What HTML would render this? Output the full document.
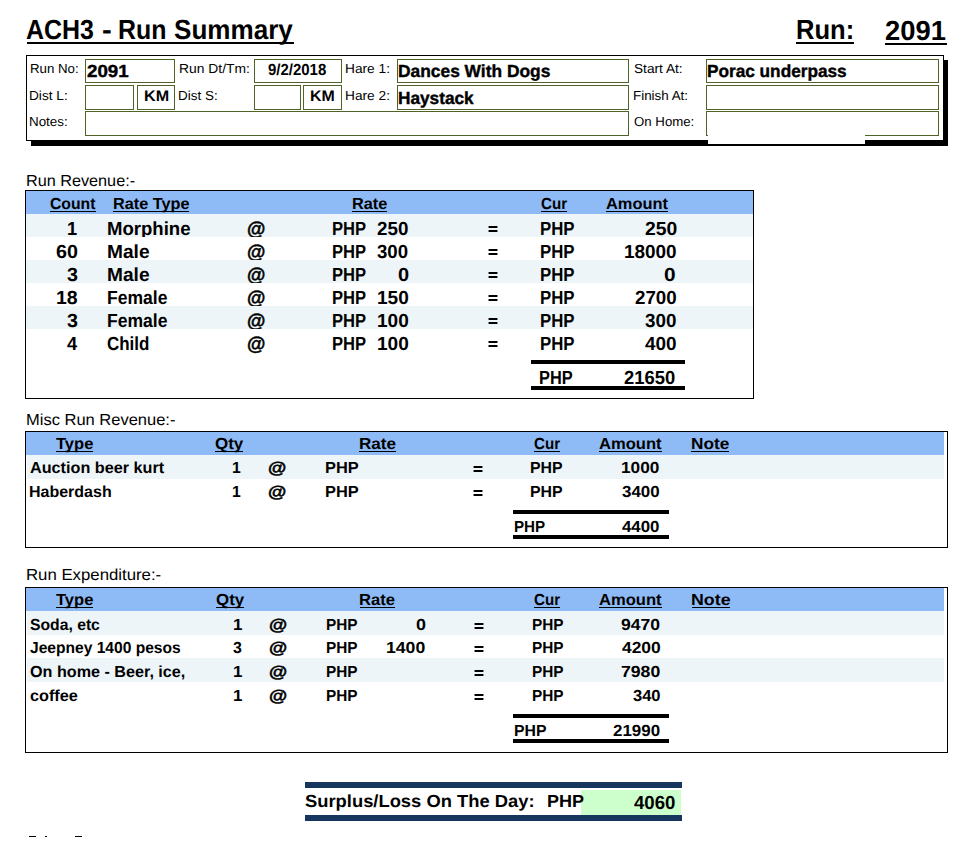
<!DOCTYPE html>
<html><head><meta charset="utf-8"><title>ACH3 - Run Summary</title><style>
html,body{margin:0;padding:0;background:#fff}
body{position:relative;width:977px;height:845px;overflow:hidden;font-family:"Liberation Sans",sans-serif;text-rendering:geometricPrecision;color:#000}
.r{position:absolute}
.t{position:absolute;white-space:pre;line-height:1;transform-origin:0 0}
</style></head><body>
<div class="t" style="left:26.38px;top:16.00px;font-size:27.64px;transform:scaleX(0.9038);font-weight:bold">ACH3</div>
<div class="t" style="left:101.53px;top:16.00px;font-size:27.64px;transform:scaleX(1.0604);font-weight:bold">-</div>
<div class="t" style="left:117.92px;top:16.00px;font-size:27.64px;transform:scaleX(0.9011);font-weight:bold">Run</div>
<div class="t" style="left:173.82px;top:16.00px;font-size:27.64px;transform:scaleX(0.9433);font-weight:bold">Summary</div>
<div class="r" style="left:27px;top:42px;width:267px;height:2px;background:#000"></div>
<div class="t" style="left:796.07px;top:16.00px;font-size:27.64px;transform:scaleX(0.9249);font-weight:bold">Run:</div>
<div class="r" style="left:796px;top:42px;width:58px;height:2px;background:#000"></div>
<div class="t" style="left:884.94px;top:17.00px;font-size:27.64px;transform:scaleX(0.9906);font-weight:bold">2091</div>
<div class="r" style="left:885px;top:43px;width:62px;height:2px;background:#000"></div>
<div class="r" style="left:31px;top:60px;width:917px;height:86px;background:#000"></div>
<div class="r" style="left:26px;top:55px;width:918px;height:86px;background:#fff"></div>
<div class="r" style="left:26px;top:55px;width:918px;height:1px;background:#000"></div>
<div class="r" style="left:26px;top:140px;width:918px;height:1px;background:#000"></div>
<div class="r" style="left:26px;top:55px;width:1px;height:86px;background:#000"></div>
<div class="r" style="left:943px;top:55px;width:1px;height:86px;background:#000"></div>
<div class="r" style="left:85px;top:59px;width:90px;height:1px;background:#4F6228"></div>
<div class="r" style="left:85px;top:82px;width:90px;height:1px;background:#4F6228"></div>
<div class="r" style="left:85px;top:59px;width:1px;height:24px;background:#4F6228"></div>
<div class="r" style="left:174px;top:59px;width:1px;height:24px;background:#4F6228"></div>
<div class="r" style="left:254px;top:59px;width:88px;height:1px;background:#4F6228"></div>
<div class="r" style="left:254px;top:82px;width:88px;height:1px;background:#4F6228"></div>
<div class="r" style="left:254px;top:59px;width:1px;height:24px;background:#4F6228"></div>
<div class="r" style="left:341px;top:59px;width:1px;height:24px;background:#4F6228"></div>
<div class="r" style="left:397px;top:59px;width:232px;height:1px;background:#4F6228"></div>
<div class="r" style="left:397px;top:82px;width:232px;height:1px;background:#4F6228"></div>
<div class="r" style="left:397px;top:59px;width:1px;height:24px;background:#4F6228"></div>
<div class="r" style="left:628px;top:59px;width:1px;height:24px;background:#4F6228"></div>
<div class="r" style="left:706px;top:59px;width:233px;height:1px;background:#4F6228"></div>
<div class="r" style="left:706px;top:82px;width:233px;height:1px;background:#4F6228"></div>
<div class="r" style="left:706px;top:59px;width:1px;height:24px;background:#4F6228"></div>
<div class="r" style="left:938px;top:59px;width:1px;height:24px;background:#4F6228"></div>
<div class="r" style="left:85px;top:85px;width:49px;height:1px;background:#4F6228"></div>
<div class="r" style="left:85px;top:109px;width:49px;height:1px;background:#4F6228"></div>
<div class="r" style="left:85px;top:85px;width:1px;height:25px;background:#4F6228"></div>
<div class="r" style="left:133px;top:85px;width:1px;height:25px;background:#4F6228"></div>
<div class="r" style="left:137px;top:85px;width:38px;height:1px;background:#4F6228"></div>
<div class="r" style="left:137px;top:109px;width:38px;height:1px;background:#4F6228"></div>
<div class="r" style="left:137px;top:85px;width:1px;height:25px;background:#4F6228"></div>
<div class="r" style="left:174px;top:85px;width:1px;height:25px;background:#4F6228"></div>
<div class="r" style="left:254px;top:85px;width:47px;height:1px;background:#4F6228"></div>
<div class="r" style="left:254px;top:109px;width:47px;height:1px;background:#4F6228"></div>
<div class="r" style="left:254px;top:85px;width:1px;height:25px;background:#4F6228"></div>
<div class="r" style="left:300px;top:85px;width:1px;height:25px;background:#4F6228"></div>
<div class="r" style="left:303px;top:85px;width:39px;height:1px;background:#4F6228"></div>
<div class="r" style="left:303px;top:109px;width:39px;height:1px;background:#4F6228"></div>
<div class="r" style="left:303px;top:85px;width:1px;height:25px;background:#4F6228"></div>
<div class="r" style="left:341px;top:85px;width:1px;height:25px;background:#4F6228"></div>
<div class="r" style="left:397px;top:85px;width:232px;height:1px;background:#4F6228"></div>
<div class="r" style="left:397px;top:109px;width:232px;height:1px;background:#4F6228"></div>
<div class="r" style="left:397px;top:85px;width:1px;height:25px;background:#4F6228"></div>
<div class="r" style="left:628px;top:85px;width:1px;height:25px;background:#4F6228"></div>
<div class="r" style="left:706px;top:85px;width:233px;height:1px;background:#4F6228"></div>
<div class="r" style="left:706px;top:109px;width:233px;height:1px;background:#4F6228"></div>
<div class="r" style="left:706px;top:85px;width:1px;height:25px;background:#4F6228"></div>
<div class="r" style="left:938px;top:85px;width:1px;height:25px;background:#4F6228"></div>
<div class="r" style="left:85px;top:111px;width:544px;height:1px;background:#4F6228"></div>
<div class="r" style="left:85px;top:135px;width:544px;height:1px;background:#4F6228"></div>
<div class="r" style="left:85px;top:111px;width:1px;height:25px;background:#4F6228"></div>
<div class="r" style="left:628px;top:111px;width:1px;height:25px;background:#4F6228"></div>
<div class="r" style="left:706px;top:111px;width:233px;height:1px;background:#4F6228"></div>
<div class="r" style="left:706px;top:135px;width:233px;height:1px;background:#4F6228"></div>
<div class="r" style="left:706px;top:111px;width:1px;height:25px;background:#4F6228"></div>
<div class="r" style="left:938px;top:111px;width:1px;height:25px;background:#4F6228"></div>
<div class="r" style="left:708px;top:135px;width:157px;height:9px;background:#fff"></div>
<div class="t" style="left:29.50px;top:62.00px;font-size:13.09px;transform:scaleX(1.0141)">Run No:</div>
<div class="t" style="left:29.47px;top:89.00px;font-size:13.09px;transform:scaleX(1.0453)">Dist L:</div>
<div class="t" style="left:29.49px;top:115.00px;font-size:13.09px;transform:scaleX(1.0232)">Notes:</div>
<div class="t" style="left:179.46px;top:62.00px;font-size:13.09px;transform:scaleX(1.0598)">Run Dt/Tm:</div>
<div class="t" style="left:177.59px;top:89.00px;font-size:13.09px;transform:scaleX(1.0286)">Dist S:</div>
<div class="t" style="left:345.37px;top:62.00px;font-size:13.09px;transform:scaleX(1.0480)">Hare 1:</div>
<div class="t" style="left:345.37px;top:89.00px;font-size:13.09px;transform:scaleX(1.0480)">Hare 2:</div>
<div class="t" style="left:633.88px;top:62.00px;font-size:13.09px;transform:scaleX(1.0442)">Start At:</div>
<div class="t" style="left:633.40px;top:89.00px;font-size:13.09px;transform:scaleX(1.0230)">Finish At:</div>
<div class="t" style="left:633.87px;top:115.00px;font-size:13.09px;transform:scaleX(1.0116)">On Home:</div>
<div class="t" style="left:86.54px;top:63.00px;font-size:17.45px;transform:scaleX(1.0756);font-weight:bold;-webkit-text-stroke:0.4px #000">2091</div>
<div class="t" style="left:398.03px;top:63.00px;font-size:17.45px;transform:scaleX(0.9960);font-weight:bold;-webkit-text-stroke:0.4px #000">Dances With Dogs</div>
<div class="t" style="left:398.04px;top:89.50px;font-size:17.45px;transform:scaleX(0.9882);font-weight:bold;-webkit-text-stroke:0.4px #000">Haystack</div>
<div class="t" style="left:706.74px;top:63.00px;font-size:17.45px;transform:scaleX(0.9869);font-weight:bold;-webkit-text-stroke:0.4px #000">Porac underpass</div>
<div class="t" style="left:267.88px;top:63.00px;font-size:16.00px;transform:scaleX(0.9357);font-weight:bold">9/2/2018</div>
<div class="t" style="left:143.51px;top:89.00px;font-size:15.27px;transform:scaleX(1.0559);font-weight:bold">KM</div>
<div class="t" style="left:309.63px;top:89.00px;font-size:15.27px;transform:scaleX(1.0421);font-weight:bold">KM</div>
<div class="t" style="left:25.66px;top:174.00px;font-size:16.00px;transform:scaleX(1.0133)">Run Revenue:-</div>
<div class="r" style="left:25px;top:190px;width:729px;height:209px;background:#fff"></div>
<div class="r" style="left:25px;top:190px;width:729px;height:1px;background:#000"></div>
<div class="r" style="left:25px;top:398px;width:729px;height:1px;background:#000"></div>
<div class="r" style="left:25px;top:190px;width:1px;height:209px;background:#000"></div>
<div class="r" style="left:753px;top:190px;width:1px;height:209px;background:#000"></div>
<div class="r" style="left:26px;top:191px;width:727px;height:23px;background:#8EBAF5"></div>
<div class="t" style="left:49.87px;top:197.00px;font-size:16.00px;transform:scaleX(0.9832);font-weight:bold">Count</div>
<div class="r" style="left:50px;top:211px;width:46px;height:1px;background:#000"></div>
<div class="t" style="left:112.50px;top:197.00px;font-size:16.00px;transform:scaleX(1.0158);font-weight:bold">Rate Type</div>
<div class="r" style="left:113px;top:211px;width:76px;height:1px;background:#000"></div>
<div class="t" style="left:351.60px;top:197.00px;font-size:16.00px;transform:scaleX(1.0169);font-weight:bold">Rate</div>
<div class="r" style="left:352px;top:211px;width:35px;height:1px;background:#000"></div>
<div class="t" style="left:540.89px;top:197.00px;font-size:16.00px;transform:scaleX(0.9483);font-weight:bold">Cur</div>
<div class="r" style="left:541px;top:211px;width:26px;height:1px;background:#000"></div>
<div class="t" style="left:605.79px;top:197.00px;font-size:16.00px;transform:scaleX(1.0261);font-weight:bold">Amount</div>
<div class="r" style="left:606px;top:211px;width:62px;height:1px;background:#000"></div>
<div class="r" style="left:26px;top:214px;width:727px;height:23px;background:#EDF5F8"></div>
<div class="t" style="left:66.76px;top:221.00px;font-size:18.91px;transform:scaleX(0.9667);font-weight:bold">1</div>
<div class="t" style="left:106.55px;top:221.00px;font-size:18.91px;transform:scaleX(0.9813);font-weight:bold">Morphine</div>
<div class="t" style="left:246.92px;top:221.00px;font-size:18.91px;transform:scaleX(0.9962);font-weight:bold;-webkit-text-stroke:0.5px #000">@</div>
<div class="t" style="left:331.98px;top:221.00px;font-size:18.91px;transform:scaleX(0.8765);font-weight:bold">PHP</div>
<div class="t" style="left:376.84px;top:221.00px;font-size:18.91px;transform:scaleX(0.9929);font-weight:bold">250</div>
<div class="r" style="left:489px;top:226px;width:8px;height:2px;background:#000;box-shadow:-1px 0 0 #888,1px 0 0 #888"></div><div class="r" style="left:489px;top:230px;width:8px;height:2px;background:#000;box-shadow:-1px 0 0 #888,1px 0 0 #888"></div>
<div class="t" style="left:539.77px;top:221.00px;font-size:18.91px;transform:scaleX(0.8873);font-weight:bold">PHP</div>
<div class="t" style="left:644.82px;top:221.00px;font-size:18.91px;transform:scaleX(1.0228);font-weight:bold">250</div>
<div class="r" style="left:26px;top:237px;width:727px;height:23px;background:#fff"></div>
<div class="t" style="left:55.76px;top:244.00px;font-size:18.91px;transform:scaleX(1.0424);font-weight:bold">60</div>
<div class="t" style="left:106.51px;top:244.00px;font-size:18.91px;transform:scaleX(1.0116);font-weight:bold">Male</div>
<div class="t" style="left:246.92px;top:244.00px;font-size:18.91px;transform:scaleX(0.9962);font-weight:bold;-webkit-text-stroke:0.5px #000">@</div>
<div class="t" style="left:331.98px;top:244.00px;font-size:18.91px;transform:scaleX(0.8765);font-weight:bold">PHP</div>
<div class="t" style="left:377.08px;top:244.00px;font-size:18.91px;transform:scaleX(0.9852);font-weight:bold">300</div>
<div class="r" style="left:489px;top:249px;width:8px;height:2px;background:#000;box-shadow:-1px 0 0 #888,1px 0 0 #888"></div><div class="r" style="left:489px;top:253px;width:8px;height:2px;background:#000;box-shadow:-1px 0 0 #888,1px 0 0 #888"></div>
<div class="t" style="left:539.77px;top:244.00px;font-size:18.91px;transform:scaleX(0.8873);font-weight:bold">PHP</div>
<div class="t" style="left:624.42px;top:244.00px;font-size:18.91px;transform:scaleX(1.0014);font-weight:bold">18000</div>
<div class="r" style="left:26px;top:260px;width:727px;height:23px;background:#EDF5F8"></div>
<div class="t" style="left:66.56px;top:267.00px;font-size:18.91px;transform:scaleX(1.0417);font-weight:bold">3</div>
<div class="t" style="left:106.51px;top:267.00px;font-size:18.91px;transform:scaleX(1.0116);font-weight:bold">Male</div>
<div class="t" style="left:246.92px;top:267.00px;font-size:18.91px;transform:scaleX(0.9962);font-weight:bold;-webkit-text-stroke:0.5px #000">@</div>
<div class="t" style="left:331.98px;top:267.00px;font-size:18.91px;transform:scaleX(0.8765);font-weight:bold">PHP</div>
<div class="t" style="left:397.50px;top:267.00px;font-size:18.91px;transform:scaleX(1.0577);font-weight:bold">0</div>
<div class="r" style="left:489px;top:272px;width:8px;height:2px;background:#000;box-shadow:-1px 0 0 #888,1px 0 0 #888"></div><div class="r" style="left:489px;top:276px;width:8px;height:2px;background:#000;box-shadow:-1px 0 0 #888,1px 0 0 #888"></div>
<div class="t" style="left:539.77px;top:267.00px;font-size:18.91px;transform:scaleX(0.8873);font-weight:bold">PHP</div>
<div class="t" style="left:664.37px;top:267.00px;font-size:18.91px;transform:scaleX(1.1022);font-weight:bold">0</div>
<div class="r" style="left:26px;top:283px;width:727px;height:23px;background:#fff"></div>
<div class="t" style="left:55.68px;top:290.00px;font-size:18.91px;transform:scaleX(1.0318);font-weight:bold">18</div>
<div class="t" style="left:106.62px;top:290.00px;font-size:18.91px;transform:scaleX(0.9265);font-weight:bold">Female</div>
<div class="t" style="left:246.92px;top:290.00px;font-size:18.91px;transform:scaleX(0.9962);font-weight:bold;-webkit-text-stroke:0.5px #000">@</div>
<div class="t" style="left:331.98px;top:290.00px;font-size:18.91px;transform:scaleX(0.8765);font-weight:bold">PHP</div>
<div class="t" style="left:376.81px;top:290.00px;font-size:18.91px;transform:scaleX(1.0070);font-weight:bold">150</div>
<div class="r" style="left:489px;top:295px;width:8px;height:2px;background:#000;box-shadow:-1px 0 0 #888,1px 0 0 #888"></div><div class="r" style="left:489px;top:299px;width:8px;height:2px;background:#000;box-shadow:-1px 0 0 #888,1px 0 0 #888"></div>
<div class="t" style="left:539.77px;top:290.00px;font-size:18.91px;transform:scaleX(0.8873);font-weight:bold">PHP</div>
<div class="t" style="left:634.84px;top:290.00px;font-size:18.91px;transform:scaleX(0.9924);font-weight:bold">2700</div>
<div class="r" style="left:26px;top:306px;width:727px;height:23px;background:#EDF5F8"></div>
<div class="t" style="left:66.56px;top:313.00px;font-size:18.91px;transform:scaleX(1.0417);font-weight:bold">3</div>
<div class="t" style="left:106.62px;top:313.00px;font-size:18.91px;transform:scaleX(0.9265);font-weight:bold">Female</div>
<div class="t" style="left:246.92px;top:313.00px;font-size:18.91px;transform:scaleX(0.9962);font-weight:bold;-webkit-text-stroke:0.5px #000">@</div>
<div class="t" style="left:331.98px;top:313.00px;font-size:18.91px;transform:scaleX(0.8765);font-weight:bold">PHP</div>
<div class="t" style="left:376.81px;top:313.00px;font-size:18.91px;transform:scaleX(1.0070);font-weight:bold">100</div>
<div class="r" style="left:489px;top:318px;width:8px;height:2px;background:#000;box-shadow:-1px 0 0 #888,1px 0 0 #888"></div><div class="r" style="left:489px;top:322px;width:8px;height:2px;background:#000;box-shadow:-1px 0 0 #888,1px 0 0 #888"></div>
<div class="t" style="left:539.77px;top:313.00px;font-size:18.91px;transform:scaleX(0.8873);font-weight:bold">PHP</div>
<div class="t" style="left:645.18px;top:313.00px;font-size:18.91px;transform:scaleX(0.9951);font-weight:bold">300</div>
<div class="r" style="left:26px;top:329px;width:727px;height:23px;background:#fff"></div>
<div class="t" style="left:66.73px;top:336.00px;font-size:18.91px;transform:scaleX(0.9687);font-weight:bold">4</div>
<div class="t" style="left:107.12px;top:336.00px;font-size:18.91px;transform:scaleX(0.8974);font-weight:bold">Child</div>
<div class="t" style="left:246.92px;top:336.00px;font-size:18.91px;transform:scaleX(0.9962);font-weight:bold;-webkit-text-stroke:0.5px #000">@</div>
<div class="t" style="left:331.98px;top:336.00px;font-size:18.91px;transform:scaleX(0.8765);font-weight:bold">PHP</div>
<div class="t" style="left:376.81px;top:336.00px;font-size:18.91px;transform:scaleX(1.0070);font-weight:bold">100</div>
<div class="r" style="left:489px;top:341px;width:8px;height:2px;background:#000;box-shadow:-1px 0 0 #888,1px 0 0 #888"></div><div class="r" style="left:489px;top:345px;width:8px;height:2px;background:#000;box-shadow:-1px 0 0 #888,1px 0 0 #888"></div>
<div class="t" style="left:539.77px;top:336.00px;font-size:18.91px;transform:scaleX(0.8873);font-weight:bold">PHP</div>
<div class="t" style="left:645.02px;top:336.00px;font-size:18.91px;transform:scaleX(1.0003);font-weight:bold">400</div>
<div class="r" style="left:531px;top:360px;width:154px;height:4px;background:#000"></div>
<div class="r" style="left:531px;top:386px;width:154px;height:4px;background:#000"></div>
<div class="t" style="left:538.90px;top:370.00px;font-size:18.91px;transform:scaleX(0.8656);font-weight:bold">PHP</div>
<div class="t" style="left:623.96px;top:370.00px;font-size:18.91px;transform:scaleX(0.9736);font-weight:bold">21650</div>
<div class="t" style="left:25.64px;top:413.00px;font-size:16.00px;transform:scaleX(1.0306)">Misc Run Revenue:-</div>
<div class="r" style="left:25px;top:431px;width:923px;height:117px;background:#fff"></div>
<div class="r" style="left:25px;top:431px;width:923px;height:1px;background:#000"></div>
<div class="r" style="left:25px;top:547px;width:923px;height:1px;background:#000"></div>
<div class="r" style="left:25px;top:431px;width:1px;height:117px;background:#000"></div>
<div class="r" style="left:947px;top:431px;width:1px;height:117px;background:#000"></div>
<div class="r" style="left:26px;top:432px;width:918px;height:23px;background:#8EBAF5"></div>
<div class="t" style="left:55.83px;top:437.00px;font-size:16.00px;transform:scaleX(1.0327);font-weight:bold">Type</div>
<div class="r" style="left:56px;top:451px;width:37px;height:1px;background:#000"></div>
<div class="t" style="left:214.62px;top:437.00px;font-size:16.00px;transform:scaleX(1.0610);font-weight:bold">Qty</div>
<div class="r" style="left:215px;top:451px;width:28px;height:1px;background:#000"></div>
<div class="t" style="left:358.55px;top:437.00px;font-size:16.00px;transform:scaleX(1.0684);font-weight:bold">Rate</div>
<div class="r" style="left:359px;top:451px;width:37px;height:1px;background:#000"></div>
<div class="t" style="left:533.79px;top:437.00px;font-size:16.00px;transform:scaleX(0.9483);font-weight:bold">Cur</div>
<div class="r" style="left:534px;top:451px;width:26px;height:1px;background:#000"></div>
<div class="t" style="left:598.59px;top:437.00px;font-size:16.00px;transform:scaleX(1.0361);font-weight:bold">Amount</div>
<div class="r" style="left:599px;top:451px;width:63px;height:1px;background:#000"></div>
<div class="t" style="left:690.64px;top:437.00px;font-size:16.00px;transform:scaleX(1.0761);font-weight:bold">Note</div>
<div class="r" style="left:691px;top:451px;width:38px;height:1px;background:#000"></div>
<div class="r" style="left:27px;top:455px;width:917px;height:24px;background:#EDF5F8"></div>
<div class="t" style="left:29.99px;top:461.00px;font-size:16.00px;transform:scaleX(1.0130);font-weight:bold">Auction beer kurt</div>
<div class="t" style="left:232.02px;top:461.00px;font-size:16.00px;transform:scaleX(0.9812);font-weight:bold">1</div>
<div class="t" style="left:267.92px;top:461.00px;font-size:16.00px;transform:scaleX(1.1701);font-weight:bold;-webkit-text-stroke:0.5px #000">@</div>
<div class="t" style="left:324.90px;top:461.00px;font-size:16.00px;transform:scaleX(1.0230);font-weight:bold">PHP</div>
<div class="r" style="left:474px;top:466px;width:8px;height:2px;background:#000;box-shadow:-1px 0 0 #888,1px 0 0 #888"></div><div class="r" style="left:474px;top:470px;width:8px;height:2px;background:#000;box-shadow:-1px 0 0 #888,1px 0 0 #888"></div>
<div class="t" style="left:530.33px;top:461.00px;font-size:16.00px;transform:scaleX(0.9910);font-weight:bold">PHP</div>
<div class="t" style="left:621.42px;top:461.00px;font-size:16.00px;transform:scaleX(1.0761);font-weight:bold">1000</div>
<div class="t" style="left:29.32px;top:485.00px;font-size:16.00px;transform:scaleX(0.9995);font-weight:bold">Haberdash</div>
<div class="t" style="left:232.02px;top:485.00px;font-size:16.00px;transform:scaleX(0.9812);font-weight:bold">1</div>
<div class="t" style="left:267.92px;top:485.00px;font-size:16.00px;transform:scaleX(1.1701);font-weight:bold;-webkit-text-stroke:0.5px #000">@</div>
<div class="t" style="left:324.90px;top:485.00px;font-size:16.00px;transform:scaleX(1.0230);font-weight:bold">PHP</div>
<div class="r" style="left:474px;top:490px;width:8px;height:2px;background:#000;box-shadow:-1px 0 0 #888,1px 0 0 #888"></div><div class="r" style="left:474px;top:494px;width:8px;height:2px;background:#000;box-shadow:-1px 0 0 #888,1px 0 0 #888"></div>
<div class="t" style="left:530.33px;top:485.00px;font-size:16.00px;transform:scaleX(0.9910);font-weight:bold">PHP</div>
<div class="t" style="left:622.12px;top:485.00px;font-size:16.00px;transform:scaleX(1.0561);font-weight:bold">3400</div>
<div class="r" style="left:513px;top:510px;width:156px;height:4px;background:#000"></div>
<div class="r" style="left:513px;top:535px;width:156px;height:4px;background:#000"></div>
<div class="t" style="left:513.58px;top:520.00px;font-size:16.00px;transform:scaleX(0.9463);font-weight:bold">PHP</div>
<div class="t" style="left:622.25px;top:520.00px;font-size:16.00px;transform:scaleX(1.0525);font-weight:bold">4400</div>
<div class="t" style="left:25.62px;top:568.00px;font-size:16.00px;transform:scaleX(1.0479)">Run Expenditure:-</div>
<div class="r" style="left:25px;top:587px;width:923px;height:166px;background:#fff"></div>
<div class="r" style="left:25px;top:587px;width:923px;height:1px;background:#000"></div>
<div class="r" style="left:25px;top:752px;width:923px;height:1px;background:#000"></div>
<div class="r" style="left:25px;top:587px;width:1px;height:166px;background:#000"></div>
<div class="r" style="left:947px;top:587px;width:1px;height:166px;background:#000"></div>
<div class="r" style="left:26px;top:588px;width:918px;height:23px;background:#8EBAF5"></div>
<div class="t" style="left:55.83px;top:593.00px;font-size:16.00px;transform:scaleX(1.0327);font-weight:bold">Type</div>
<div class="r" style="left:56px;top:607px;width:37px;height:1px;background:#000"></div>
<div class="t" style="left:215.72px;top:593.00px;font-size:16.00px;transform:scaleX(1.0571);font-weight:bold">Qty</div>
<div class="r" style="left:216px;top:607px;width:28px;height:1px;background:#000"></div>
<div class="t" style="left:359.38px;top:593.00px;font-size:16.00px;transform:scaleX(1.0381);font-weight:bold">Rate</div>
<div class="r" style="left:360px;top:607px;width:35px;height:1px;background:#000"></div>
<div class="t" style="left:533.79px;top:593.00px;font-size:16.00px;transform:scaleX(0.9483);font-weight:bold">Cur</div>
<div class="r" style="left:534px;top:607px;width:26px;height:1px;background:#000"></div>
<div class="t" style="left:598.59px;top:593.00px;font-size:16.00px;transform:scaleX(1.0361);font-weight:bold">Amount</div>
<div class="r" style="left:599px;top:607px;width:63px;height:1px;background:#000"></div>
<div class="t" style="left:690.80px;top:593.00px;font-size:16.00px;transform:scaleX(1.1114);font-weight:bold">Note</div>
<div class="r" style="left:692px;top:607px;width:38px;height:1px;background:#000"></div>
<div class="r" style="left:27px;top:611px;width:917px;height:24px;background:#EDF5F8"></div>
<div class="t" style="left:30.13px;top:618.00px;font-size:16.00px;transform:scaleX(0.9820);font-weight:bold">Soda, etc</div>
<div class="t" style="left:232.54px;top:618.00px;font-size:16.00px;transform:scaleX(1.0618);font-weight:bold">1</div>
<div class="t" style="left:268.63px;top:618.00px;font-size:16.00px;transform:scaleX(1.1628);font-weight:bold;-webkit-text-stroke:0.5px #000">@</div>
<div class="t" style="left:326.46px;top:618.00px;font-size:16.00px;transform:scaleX(0.9591);font-weight:bold">PHP</div>
<div class="t" style="left:415.58px;top:618.00px;font-size:16.00px;transform:scaleX(1.1184);font-weight:bold">0</div>
<div class="r" style="left:475px;top:623px;width:8px;height:2px;background:#000;box-shadow:-1px 0 0 #888,1px 0 0 #888"></div><div class="r" style="left:475px;top:627px;width:8px;height:2px;background:#000;box-shadow:-1px 0 0 #888,1px 0 0 #888"></div>
<div class="t" style="left:531.66px;top:618.00px;font-size:16.00px;transform:scaleX(0.9591);font-weight:bold">PHP</div>
<div class="t" style="left:621.39px;top:618.00px;font-size:16.00px;transform:scaleX(1.0972);font-weight:bold">9470</div>
<div class="t" style="left:30.37px;top:641.00px;font-size:16.00px;transform:scaleX(0.9735);font-weight:bold">Jeepney 1400 pesos</div>
<div class="t" style="left:233.24px;top:641.00px;font-size:16.00px;transform:scaleX(0.9925);font-weight:bold">3</div>
<div class="t" style="left:268.63px;top:641.00px;font-size:16.00px;transform:scaleX(1.1628);font-weight:bold;-webkit-text-stroke:0.5px #000">@</div>
<div class="t" style="left:326.46px;top:641.00px;font-size:16.00px;transform:scaleX(0.9591);font-weight:bold">PHP</div>
<div class="t" style="left:386.30px;top:641.00px;font-size:16.00px;transform:scaleX(1.1026);font-weight:bold">1400</div>
<div class="r" style="left:475px;top:646px;width:8px;height:2px;background:#000;box-shadow:-1px 0 0 #888,1px 0 0 #888"></div><div class="r" style="left:475px;top:650px;width:8px;height:2px;background:#000;box-shadow:-1px 0 0 #888,1px 0 0 #888"></div>
<div class="t" style="left:531.66px;top:641.00px;font-size:16.00px;transform:scaleX(0.9591);font-weight:bold">PHP</div>
<div class="t" style="left:621.74px;top:641.00px;font-size:16.00px;transform:scaleX(1.0871);font-weight:bold">4200</div>
<div class="r" style="left:27px;top:658px;width:917px;height:24px;background:#EDF5F8"></div>
<div class="t" style="left:29.95px;top:665.00px;font-size:16.00px;transform:scaleX(1.0097);font-weight:bold">On home - Beer, ice,</div>
<div class="t" style="left:232.54px;top:665.00px;font-size:16.00px;transform:scaleX(1.0618);font-weight:bold">1</div>
<div class="t" style="left:268.63px;top:665.00px;font-size:16.00px;transform:scaleX(1.1628);font-weight:bold;-webkit-text-stroke:0.5px #000">@</div>
<div class="t" style="left:326.46px;top:665.00px;font-size:16.00px;transform:scaleX(0.9591);font-weight:bold">PHP</div>
<div class="r" style="left:475px;top:670px;width:8px;height:2px;background:#000;box-shadow:-1px 0 0 #888,1px 0 0 #888"></div><div class="r" style="left:475px;top:674px;width:8px;height:2px;background:#000;box-shadow:-1px 0 0 #888,1px 0 0 #888"></div>
<div class="t" style="left:531.66px;top:665.00px;font-size:16.00px;transform:scaleX(0.9591);font-weight:bold">PHP</div>
<div class="t" style="left:621.25px;top:665.00px;font-size:16.00px;transform:scaleX(1.1011);font-weight:bold">7980</div>
<div class="t" style="left:29.95px;top:689.00px;font-size:16.00px;transform:scaleX(1.0148);font-weight:bold">coffee</div>
<div class="t" style="left:232.54px;top:689.00px;font-size:16.00px;transform:scaleX(1.0618);font-weight:bold">1</div>
<div class="t" style="left:268.63px;top:689.00px;font-size:16.00px;transform:scaleX(1.1628);font-weight:bold;-webkit-text-stroke:0.5px #000">@</div>
<div class="t" style="left:326.46px;top:689.00px;font-size:16.00px;transform:scaleX(0.9591);font-weight:bold">PHP</div>
<div class="r" style="left:475px;top:694px;width:8px;height:2px;background:#000;box-shadow:-1px 0 0 #888,1px 0 0 #888"></div><div class="r" style="left:475px;top:698px;width:8px;height:2px;background:#000;box-shadow:-1px 0 0 #888,1px 0 0 #888"></div>
<div class="t" style="left:531.66px;top:689.00px;font-size:16.00px;transform:scaleX(0.9591);font-weight:bold">PHP</div>
<div class="t" style="left:632.63px;top:689.00px;font-size:16.00px;transform:scaleX(1.0319);font-weight:bold">340</div>
<div class="r" style="left:513px;top:714px;width:156px;height:4px;background:#000"></div>
<div class="r" style="left:513px;top:739px;width:156px;height:4px;background:#000"></div>
<div class="t" style="left:513.54px;top:724.00px;font-size:16.00px;transform:scaleX(0.9847);font-weight:bold">PHP</div>
<div class="t" style="left:612.61px;top:724.00px;font-size:16.00px;transform:scaleX(1.0582);font-weight:bold">21990</div>
<div class="r" style="left:305px;top:782px;width:377px;height:6px;background:#17365D"></div>
<div class="r" style="left:305px;top:815px;width:377px;height:6px;background:#17365D"></div>
<div class="r" style="left:581px;top:790px;width:100px;height:25px;background:#CCFFCC"></div>
<div class="t" style="left:305.05px;top:793.00px;font-size:17.45px;transform:scaleX(1.0528);font-weight:bold">Surplus/Loss On The Day:</div>
<div class="t" style="left:546.78px;top:793.00px;font-size:17.45px;transform:scaleX(1.0345);font-weight:bold">PHP</div>
<div class="t" style="left:633.72px;top:795.00px;font-size:18.91px;transform:scaleX(0.9857);font-weight:bold">4060</div>
<div class="r" style="left:29px;top:836px;width:7px;height:1px;background:#000"></div>
<div class="r" style="left:45px;top:836px;width:2px;height:1px;background:#000"></div>
<div class="r" style="left:75px;top:836px;width:7px;height:1px;background:#000"></div>
</body></html>
